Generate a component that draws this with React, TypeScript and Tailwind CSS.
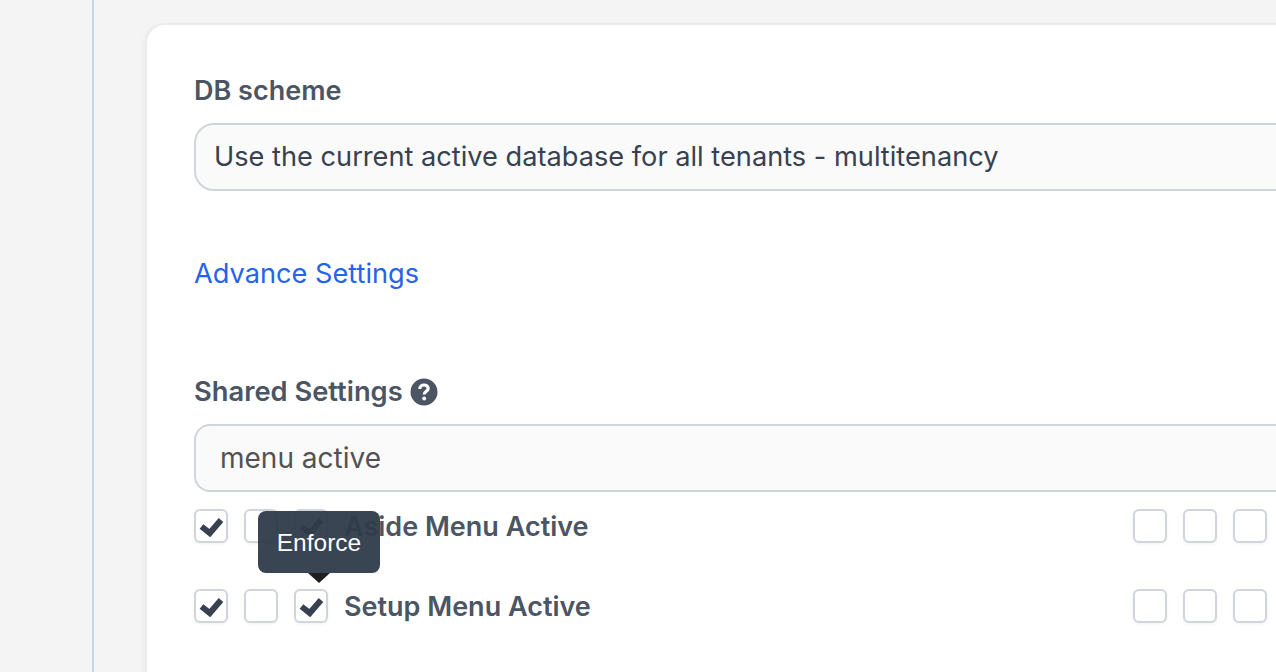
function Box({ checked }: { checked?: boolean }) {
  return (
    <div className="w-[34px] h-[34px] shrink-0 rounded-[6px] border-2 border-[#d1d5db] bg-white shadow-[0_1px_3px_rgba(0,0,0,0.06)] relative">
      {checked && (
        <svg viewBox="0 0 34 34" className="absolute -left-[2px] -top-[2px] w-[34px] h-[34px]" fill="none">
          <path d="M7.5 17.5 L15.8 24 L27 11" stroke="#374151" strokeWidth="6" />
        </svg>
      )}
    </div>
  )
}

function HelpIcon() {
  return (
    <svg viewBox="0 0 28 28" className="w-[28px] h-[28px]" fill="none">
      <circle cx="14" cy="14" r="13.5" fill="#4b5563" />
      <path d="M9.8 11 C9.8 8.5 11.6 7 14 7 C16.4 7 18.2 8.5 18.2 10.6 C18.2 13.3 14.2 13.4 14.2 16.5" stroke="#fff" strokeWidth="3.2" />
      <circle cx="14.2" cy="20.6" r="2" fill="#fff" />
    </svg>
  )
}

function SettingRow({ label, first, second, third }: { label: string; first?: boolean; second?: boolean; third?: boolean }) {
  return (
    <div className="w-[1073px] h-[34px] flex items-center">
      <div className="flex gap-4">
        <Box checked={first} />
        <Box checked={second} />
        <Box checked={third} />
      </div>
      <span className="ml-4 flex-1 pt-[2px] text-[27px] font-semibold text-[#4b5563]">{label}</span>
      <div className="flex gap-4">
        <Box />
        <Box />
        <Box />
      </div>
    </div>
  )
}

export default function App() {
  return (
    <div className="h-screen overflow-hidden bg-[#f4f4f5] flex font-['Inter',sans-serif]">
      {/* Sidebar edge */}
      <div className="w-[94px] shrink-0 border-r-2 border-[#cbd5e1]" />

      <main className="flex-1 min-w-0 pl-[51px] pt-[23px]">
        <div className="w-[1300px] h-[700px] bg-white rounded-[20px] border-2 border-[#e9ebee] border-r-0 shadow-[0_2px_6px_rgba(0,0,0,0.05)] pl-[47px] pt-[46px]">
          <div className="flex flex-col">
            <label className="block text-[27px] leading-[40px] font-semibold text-[#4b5563]">DB scheme</label>
            <div className="mt-[12px] h-[68px] rounded-[20px] border-2 border-[#d1d5db] bg-[#fafafa] pl-[18px] flex items-center text-[27.2px] text-[#374151]">
              Use the current active database for all tenants - multitenancy
            </div>

            <a className="mt-[63px] text-[27.2px] leading-[40px] text-[#2563eb]">Advance Settings</a>

            <div className="mt-[78px] flex items-center gap-[7px]">
              <label className="text-[27.3px] leading-[40px] font-semibold text-[#4b5563]">Shared Settings</label>
              <HelpIcon />
            </div>

            <div className="mt-[12px] h-[68px] rounded-[16px] border-2 border-[#d1d5db] bg-[#fafafa] pl-[24px] flex items-center text-[28px] text-[#525252]">
              menu active
            </div>

            <div className="relative mt-[17px] flex flex-col gap-[46px]">
              <SettingRow label="Aside Menu Active" first third />
              <SettingRow label="Setup Menu Active" first third />

              {/* Tooltip */}
              <div className="absolute left-[64px] top-[2px] flex flex-col items-center">
                <div className="w-[122px] h-[62px] pt-[2px] rounded-[8px] bg-[#2f3b4a]/95 text-white text-[24.5px] font-['Liberation_Sans',sans-serif] flex items-center justify-center">
                  Enforce
                </div>
                <div className="w-0 h-0 border-x-[11px] border-x-transparent border-t-[10px] border-t-[#1f1f1f]" />
              </div>
            </div>
          </div>
        </div>
      </main>
    </div>
  )
}
